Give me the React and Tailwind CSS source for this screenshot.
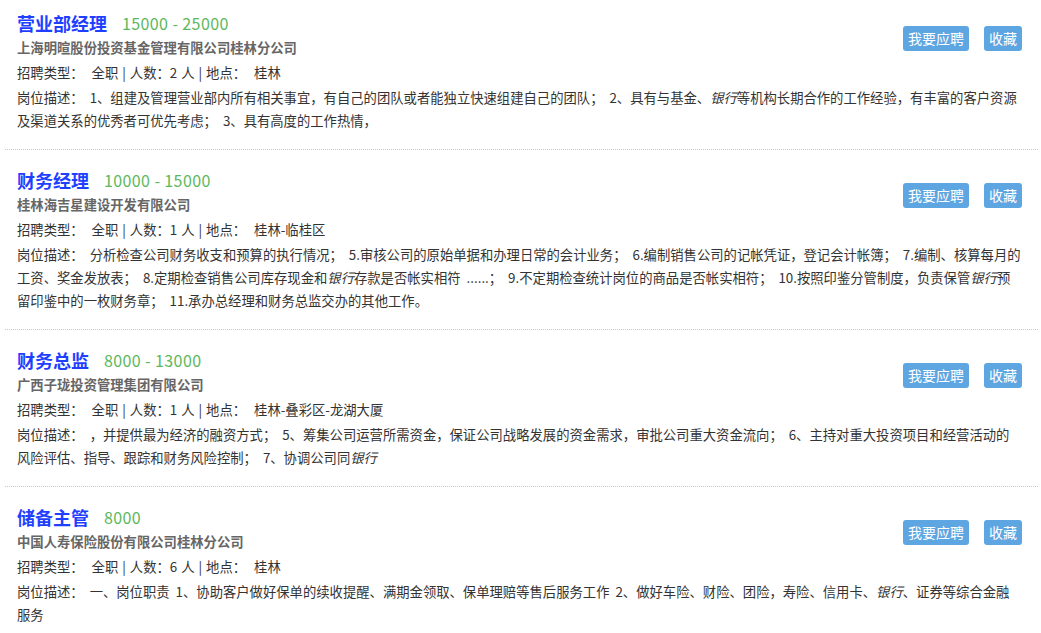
import React from 'react'

const JOBS = [
  {
    title: '营业部经理',
    salary: '15000 - 25000',
    company: '上海明暄股份投资基金管理有限公司桂林分公司',
    count: 2,
    place: '桂林',
    desc: [
      ['岗位描述： 1、组建及管理营业部内所有相关事宜，有自己的团队或者能独立快速组建自己的团队； 2、具有与基金、', { em: '银行' }, '等机构长期合作的工作经验，有丰富的客户资源'],
      ['及渠道关系的优秀者可优先考虑； 3、具有高度的工作热情，'],
    ],
  },
  {
    title: '财务经理',
    salary: '10000 - 15000',
    company: '桂林海吉星建设开发有限公司',
    count: 1,
    place: '桂林-临桂区',
    desc: [
      ['岗位描述： 分析检查公司财务收支和预算的执行情况； 5.审核公司的原始单据和办理日常的会计业务； 6.编制销售公司的记帐凭证，登记会计帐簿； 7.编制、核算每月的'],
      ['工资、奖金发放表； 8.定期检查销售公司库存现金和', { em: '银行' }, '存款是否帐实相符 ......； 9.不定期检查统计岗位的商品是否帐实相符； 10.按照印鉴分管制度，负责保管', { em: '银行' }, '预'],
      ['留印鉴中的一枚财务章； 11.承办总经理和财务总监交办的其他工作。'],
    ],
  },
  {
    title: '财务总监',
    salary: '8000 - 13000',
    company: '广西子珑投资管理集团有限公司',
    count: 1,
    place: '桂林-叠彩区-龙湖大厦',
    desc: [
      ['岗位描述： ，并提供最为经济的融资方式； 5、筹集公司运营所需资金，保证公司战略发展的资金需求，审批公司重大资金流向； 6、主持对重大投资项目和经营活动的'],
      ['风险评估、指导、跟踪和财务风险控制； 7、协调公司同', { em: '银行' }],
    ],
  },
  {
    title: '储备主管',
    salary: '8000',
    company: '中国人寿保险股份有限公司桂林分公司',
    count: 6,
    place: '桂林',
    desc: [
      ['岗位描述： 一、岗位职责 1、协助客户做好保单的续收提醒、满期金领取、保单理赔等售后服务工作 2、做好车险、财险、团险，寿险、信用卡、', { em: '银行' }, '、证券等综合金融'],
      ['服务'],
    ],
  },
]

function JobItem({ job, first }) {
  return (
    <div className={`border-b border-dotted border-[#c8c8c8] pl-[12px] pr-[4px] pb-[17px] ${first ? 'pt-[10px]' : 'pt-[17px]'}`}>
      <div className="flex justify-between">
        <div>
          <div className="flex items-center leading-[26px]">
            <span className="text-[18px] font-bold text-[#1f3fff]">{job.title}</span>
            <span className="ml-[15px] text-[16px] tracking-[0.4px] text-[#5cb85c]">{job.salary}</span>
          </div>
          <div className="text-[13.33px] leading-[24px] font-bold text-[#666]">{job.company}</div>
          <div className="text-[13.33px] leading-[26px] text-[#333] whitespace-pre [word-spacing:1px]">
            招聘类型：  全职 | 人数：{job.count} 人 | 地点：  {job.place}
          </div>
        </div>
        <div className="flex gap-[15px] mt-[16px] mr-[12px] self-start">
          <button className="h-[25px] px-[5px] rounded-[3px] bg-[#5ea6e2] text-white text-[14px] leading-[25px]">我要应聘</button>
          <button className="h-[25px] px-[5px] rounded-[3px] bg-[#5ea6e2] text-white text-[14px] leading-[25px]">收藏</button>
        </div>
      </div>
      <div className="text-[13.33px] leading-[23px] text-[#333] [word-spacing:3px]">
        {job.desc.map((line, i) => (
          <div key={i} className="whitespace-pre">
            {line.map((p, j) => (typeof p === 'string' ? <span key={j}>{p}</span> : <em key={j}>{p.em}</em>))}
          </div>
        ))}
      </div>
    </div>
  )
}

export default function App() {
  return (
    <div className="bg-white min-h-screen overflow-hidden" style={{ fontFamily: '"Noto Sans CJK SC", "Noto Sans", sans-serif' }}>
      <div className="mx-[5px] w-[1033px]">
        {JOBS.map((job, i) => (
          <JobItem key={i} job={job} first={i === 0} />
        ))}
      </div>
    </div>
  )
}
